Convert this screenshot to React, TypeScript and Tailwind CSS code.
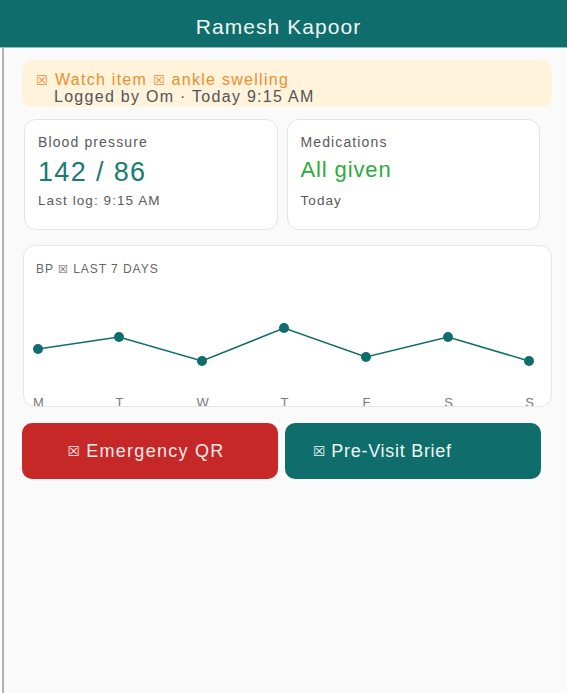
const DAYS = ['M', 'T', 'W', 'T', 'F', 'S', 'S']
const XS = [14, 95, 178, 260, 342, 424, 505]
const YS = [72, 60, 84, 51, 80, 60, 84]

const tofu = { fontFamily: '"DejaVu Sans", sans-serif' }

function BpChart() {
  const line = XS.map((x, i) => `${x},${YS[i]}`).join(' ')
  return (
    <svg width="529" height="130" viewBox="0 0 529 130" className="block">
      <polyline points={line} fill="none" stroke="#0f6e6b" strokeWidth="1.6" />
      {XS.map((x, i) => (
        <circle key={i} cx={x} cy={YS[i]} r="5" fill="#0f6e6b" />
      ))}
      {XS.map((x, i) => (
        <text key={'d' + i} x={x + 1} y="130" textAnchor="middle" fontSize="13" fill="#7a7a7a">
          {DAYS[i]}
        </text>
      ))}
    </svg>
  )
}

export default function App() {
  return (
    <div
      className="w-[567px] h-[693px] bg-white flex flex-col tracking-[0.06em]"
      style={{ fontFamily: '"Liberation Sans", Arial, sans-serif' }}
    >
      {/* header */}
      <header className="h-[48px] shrink-0 bg-[#0f6e6b] border-b border-[#8fbfbc] flex items-center justify-center pr-[10px] pt-[7px]">
        <h1 className="text-[#f2f7f7] text-[21px] tracking-[0.05em]">Ramesh Kapoor</h1>
      </header>

      <div className="flex-1 ml-[2px] border-l-2 border-[#b3b3b3] bg-[#fafafa] pl-[18px] pr-[15px] pt-[12px]">
        {/* watch item */}
        <div className="rounded-[10px] bg-[#fff3dc] px-[14px] pt-[12px] pb-[2px] leading-[16px] text-[16px] tracking-[0.08em]">
          <div className="text-[#ec8f2c]">
            <span className="text-[13px] mr-[6px]" style={tofu}>☒</span>
            Watch item <span className="text-[13px]" style={tofu}>☒</span> ankle swelling
          </div>
          <div className="pl-[18px] text-[#555555]">Logged by Om · Today 9:15 AM</div>
        </div>

        {/* stat cards */}
        <div className="grid grid-cols-2 gap-[9px] mt-[12px] pl-[2px] pr-[12px]">
          <div className="h-[111px] rounded-[12px] bg-white border border-[#e4e4e4] px-[13px] pt-[14px]">
            <div className="text-[14px] leading-[16px] tracking-[0.08em] text-[#5a5a5a]">Blood pressure</div>
            <div className="text-[27px] leading-[28px] mt-[8px] tracking-[0.05em] text-[#1a7a74]">142 / 86</div>
            <div className="text-[13.5px] leading-[16px] mt-[7px] tracking-[0.08em] text-[#5a5a5a]">Last log: 9:15 AM</div>
          </div>
          <div className="h-[111px] rounded-[12px] bg-white border border-[#e4e4e4] px-[13px] pt-[14px]">
            <div className="text-[14px] leading-[16px] tracking-[0.08em] text-[#5a5a5a]">Medications</div>
            <div className="text-[22px] leading-[28px] mt-[6px] tracking-[0.04em] text-[#2eaa3c]">All given</div>
            <div className="text-[13.5px] leading-[16px] mt-[9px] tracking-[0.08em] text-[#5a5a5a]">Today</div>
          </div>
        </div>

        {/* chart */}
        <div className="mt-[15px] ml-[1px] h-[162px] rounded-[12px] bg-white border border-[#e6e6e6] overflow-hidden">
          <div className="h-[31px] pt-[15px] px-[12px] text-[12px] leading-[16px] text-[#666666]">
            BP <span className="text-[11px]" style={tofu}>☒</span> LAST 7 DAYS
          </div>
          <BpChart />
        </div>

        {/* actions */}
        <div className="grid grid-cols-2 gap-[7px] mt-[16px] pr-[11px]">
          <button className="h-[56px] rounded-[10px] bg-[#c62828] text-[#fbeaea] text-[18px] tracking-[0.07em] flex items-center justify-center pr-[8px]">
            <span className="text-[14px] mr-[5px]" style={tofu}>☒</span>
            Emergency QR
          </button>
          <button className="h-[56px] rounded-[10px] bg-[#0f6e6b] text-[#eef6f6] text-[18px] tracking-[0.04em] flex items-center pl-[28px]">
            <span className="text-[14px] mr-[5px]" style={tofu}>☒</span>
            Pre-Visit Brief
          </button>
        </div>
      </div>
    </div>
  )
}
